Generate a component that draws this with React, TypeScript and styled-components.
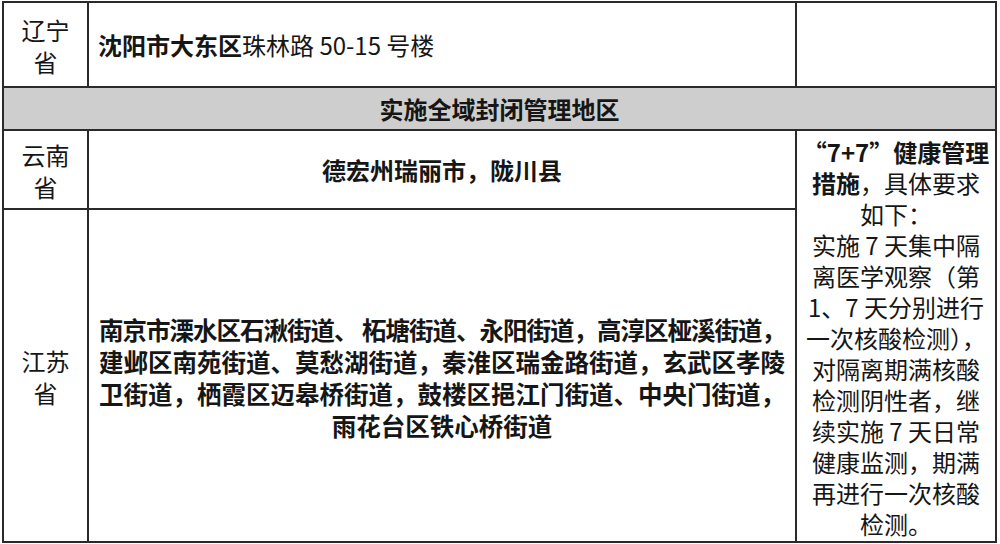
import React from "react"
import styled, { createGlobalStyle } from "styled-components"

const GlobalStyle = createGlobalStyle`
  html, body {
    margin: 0;
    padding: 0;
    background: #ffffff;
  }
  body {
    font-family: "Noto Sans CJK SC", "Noto Sans", sans-serif;
    color: #161616;
  }
`

const Page = styled.div`
  width: 1000px;
  height: 544px;
  overflow: hidden;
  background: #fff;
  padding: 1px 0 0 2px;
  box-sizing: border-box;
`

const Table = styled.table`
  border-collapse: collapse;
  table-layout: fixed;
  width: 993px;
`

const Row = styled.tr<{ $h: number }>`
  height: ${props => props.$h}px;
`

const Cell = styled.td<{ $align?: string; $bold?: boolean; $size?: number }>`
  border: 2px solid #2a2a2a;
  padding: 0;
  text-align: ${props => props.$align || "center"};
  vertical-align: middle;
  font-size: ${props => props.$size || 24}px;
  font-weight: ${props => (props.$bold ? 700 : 400)};
  line-height: 31px;
  white-space: nowrap;
`

const Province = styled(Cell)`
  line-height: 32px;
  padding-top: 2px;
`

const Address = styled(Cell)`
  padding-left: 9px;
`

const Band = styled(Cell)`
  background: #cecece;
  font-weight: 700;
`

const Streets = styled(Cell)`
  line-height: 32px;
  padding-top: 4px;
`

const Measures = styled(Cell)`
  line-height: 31px;
  padding-top: 2px;
`

const Line = styled.span<{ $tight?: boolean }>`
  display: block;
  letter-spacing: ${props => (props.$tight ? "-1px" : "0")};
`

const Strong = styled.b`
  font-weight: 700;
`

const Plain = styled.span`
  font-weight: 400;
`

const App = () => {
  return (
    <Page>
      <GlobalStyle />
      <Table>
        <colgroup>
          <col style={{ width: 85 }} />
          <col style={{ width: 708 }} />
          <col style={{ width: 200 }} />
        </colgroup>
        <tbody>
          <Row $h={85}>
            <Province>
              <Line>辽宁</Line>
              <Line>省</Line>
            </Province>
            <Address $align="left">
              <Strong>沈阳市大东区</Strong>
              <Plain>珠林路 50-15 号楼</Plain>
            </Address>
            <Cell />
          </Row>
          <Row $h={43}>
            <Band colSpan={3}>实施全域封闭管理地区</Band>
          </Row>
          <Row $h={79}>
            <Province>
              <Line>云南</Line>
              <Line>省</Line>
            </Province>
            <Cell $bold>德宏州瑞丽市，陇川县</Cell>
            <Measures rowSpan={2}>
              <Line>
                <Strong>“7+7”健康管理</Strong>
              </Line>
              <Line>
                <Strong>措施</Strong>，具体要求
              </Line>
              <Line>如下：</Line>
              <Line>实施 7 天集中隔</Line>
              <Line>离医学观察（第</Line>
              <Line>1、7 天分别进行</Line>
              <Line>一次核酸检测），</Line>
              <Line>对隔离期满核酸</Line>
              <Line>检测阴性者，继</Line>
              <Line>续实施 7 天日常</Line>
              <Line>健康监测，期满</Line>
              <Line>再进行一次核酸</Line>
              <Line>检测。</Line>
            </Measures>
          </Row>
          <Row $h={333}>
            <Province>
              <Line>江苏</Line>
              <Line>省</Line>
            </Province>
            <Streets $bold $size={24.5}>
              <Line $tight>南京市溧水区石湫街道、 柘塘街道、永阳街道，高淳区桠溪街道，</Line>
              <Line>建邺区南苑街道、莫愁湖街道，秦淮区瑞金路街道，玄武区孝陵</Line>
              <Line>卫街道，栖霞区迈皋桥街道，鼓楼区挹江门街道、中央门街道，</Line>
              <Line>雨花台区铁心桥街道</Line>
            </Streets>
          </Row>
        </tbody>
      </Table>
    </Page>
  )
}

export default App
